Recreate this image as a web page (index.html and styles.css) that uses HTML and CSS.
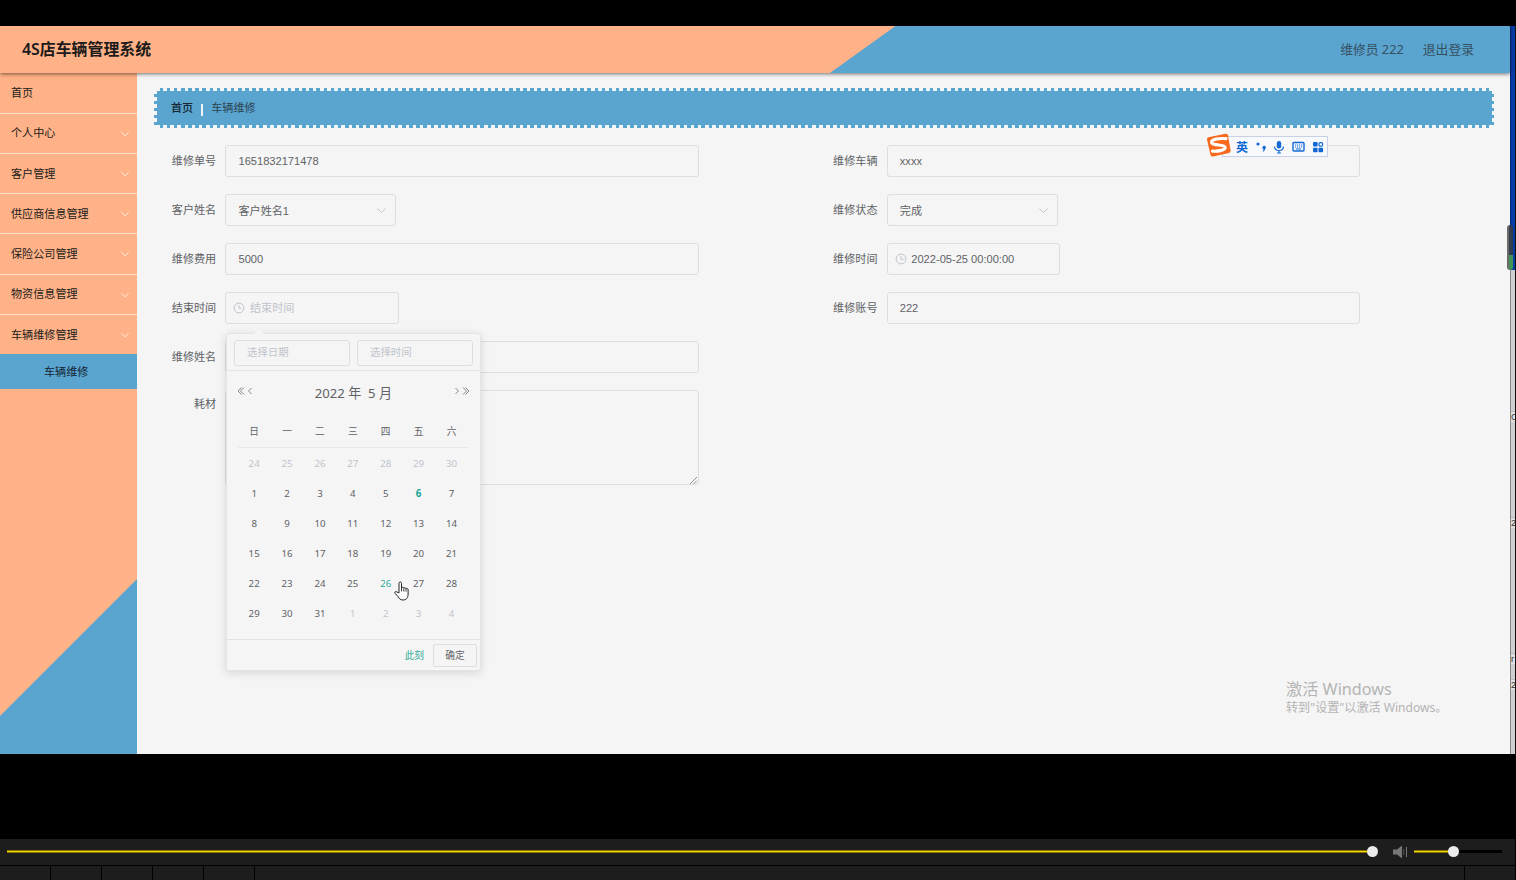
FILE: index.html
```html
<!DOCTYPE html>
<html lang="zh-CN">
<head>
<meta charset="utf-8">
<title>4S店车辆管理系统</title>
<link rel="stylesheet" href="styles.css">
</head>
<body>
<svg width="0" height="0" class="defs">
  <symbol id="down" viewBox="0 0 10 10"><path d="M1.300 3.200L5 6.800l3.700-3.600" fill="none" stroke="currentColor" stroke-width=".9"/></symbol>
  <symbol id="clock" viewBox="0 0 12 12"><circle cx="6" cy="6" r="4.9" fill="none" stroke="currentColor"/><path d="M6 3v3.300h2.600" fill="none" stroke="currentColor"/></symbol>
</svg>
<div class="screen">
  <div class="app">
    <header class="header">
      <h1 class="title">4S店车辆管理系统</h1>
      <div class="user"><span>维修员 222</span><span>退出登录</span></div>
    </header>
    <div class="main">
      <nav class="side">
        <div class="item">首页</div>
        <div class="item">个人中心<svg><use href="#down"/></svg></div>
        <div class="item">客户管理<svg><use href="#down"/></svg></div>
        <div class="item">供应商信息管理<svg><use href="#down"/></svg></div>
        <div class="item">保险公司管理<svg><use href="#down"/></svg></div>
        <div class="item">物资信息管理<svg><use href="#down"/></svg></div>
        <div class="item last">车辆维修管理<svg><use href="#down"/></svg></div>
        <div class="sub">车辆维修</div>
      </nav>
      <main class="content">
        <div class="crumb"><b>首页</b><i></i><span>车辆维修</span></div>
        <div class="form">
          <div class="field"><label>维修单号</label><div class="input">1651832171478</div></div>
          <div class="field"><label>维修车辆</label><div class="input">xxxx</div></div>
          <div class="field"><label>客户姓名</label><div class="input select">客户姓名1<svg><use href="#down"/></svg></div></div>
          <div class="field"><label>维修状态</label><div class="input select">完成<svg><use href="#down"/></svg></div></div>
          <div class="field"><label>维修费用</label><div class="input">5000</div></div>
          <div class="field"><label>维修时间</label><div class="input date"><svg><use href="#clock"/></svg>2022-05-25 00:00:00</div></div>
          <div class="field"><label>结束时间</label><div class="input date hint"><svg><use href="#clock"/></svg>结束时间</div></div>
          <div class="field"><label>维修账号</label><div class="input">222</div></div>
          <div class="field"><label>维修姓名</label><div class="input"></div></div>
          <div></div>
          <div class="field"><label>耗材</label><div class="input area"><svg viewBox="0 0 8 8"><path d="M0 8L8 0M4 8l4-4" stroke="#777" stroke-width=".9"/></svg></div></div>
        </div>
      </main>
    </div>
  </div>
  <aside class="behind">
    <div class="blue"></div>
    <div class="grey"><i class="t1">C</i><i class="t2">2</i><i class="t3">r</i><i class="t4">2</i></div>
  </aside>
  <div class="meter"></div>
</div>

<section class="picker">
  <div class="arrow"></div>
  <div class="ptop"><div>选择日期</div><div>选择时间</div></div>
  <div class="phead">
    <svg class="nav" viewBox="0 0 16 10"><path d="M4.500 1.500L1 5l3.500 3.500M7 1.500L3.500 5 7 8.500M14.500 2L11.500 5l3 3"/></svg>
    <div class="ym">2022 年&nbsp; 5 月</div>
    <svg class="nav" viewBox="0 0 16 10"><path d="M1.500 2l3 3-3 3M9 1.500L12.500 5 9 8.500M11.500 1.500L15 5l-3.500 3.500"/></svg>
  </div>
  <div class="week"><span>日</span><span>一</span><span>二</span><span>三</span><span>四</span><span>五</span><span>六</span></div>
  <div class="days">
    <span class="off">24</span><span class="off">25</span><span class="off">26</span><span class="off">27</span><span class="off">28</span><span class="off">29</span><span class="off">30</span>
    <span>1</span><span>2</span><span>3</span><span>4</span><span>5</span><span class="today">6</span><span>7</span>
    <span>8</span><span>9</span><span>10</span><span>11</span><span>12</span><span>13</span><span>14</span>
    <span>15</span><span>16</span><span>17</span><span>18</span><span>19</span><span>20</span><span>21</span>
    <span>22</span><span>23</span><span>24</span><span>25</span><span class="hover">26</span><span>27</span><span>28</span>
    <span>29</span><span>30</span><span>31</span><span class="off">1</span><span class="off">2</span><span class="off">3</span><span class="off">4</span>
  </div>
  <div class="pfoot"><span class="now">此刻</span><span class="ok">确定</span></div>
</section>

<svg class="cursor" viewBox="0 0 15 20"><path d="M5 12V2.300C5 .5 7.500.5 7.500 2.300V7c.3-1.200 2.200-1 2.300.3.500-1 2.100-.6 2.200.5.700-.8 2.100-.3 2.100.9V13c0 3.600-1.600 6-5.100 6-2.700 0-4-1.600-5-3.400L1 12.300c-.8-1.400.8-2.300 1.900-1.300z" fill="#fff" stroke="#222" stroke-width="1"/><path d="M7.500 7v3.300M9.800 7.500v3M12 8v2.700" stroke="#222" stroke-width=".9"/></svg>

<div class="ime">
  <span class="ying">英</span>
  <svg width="12" height="12" viewBox="0 0 12 12"><circle cx="3" cy="3" r="1.600"/><path d="M7.500 6.300a1.700 1.700 0 1 1 2.700 1.500C10 9.300 9.300 10.300 8 10.700l-.3-.7c.7-.4 1-.9 1-1.500-.7-.1-1.200-.8-1.200-1.500z"/></svg>
  <svg width="12" height="14" viewBox="0 0 12 14"><rect x="3.800" y="1" width="4.400" height="7.500" rx="2.200"/><path d="M1.500 6.500c.3 5.300 8.700 5.300 9 0M6 10.500V13M4 13h4" fill="none" stroke="#1269d6" stroke-width="1.200"/></svg>
  <svg width="13" height="12" viewBox="0 0 13 12"><rect x="1" y="1.500" width="11" height="8.500" rx="1" fill="none" stroke="#1269d6" stroke-width="1.400"/><path d="M3 4h7.500M3 6h7.500" stroke="#1269d6" stroke-dasharray="1.200 .8"/><path d="M4 8h5" stroke="#1269d6"/></svg>
  <svg width="12" height="12" viewBox="0 0 12 12"><rect x="1" y="1" width="4.600" height="4.600" rx="1"/><rect x="7" y="1.600" width="3.600" height="3.600" rx="1.200" fill="none" stroke="#1269d6" stroke-width="1.200"/><rect x="1" y="6.700" width="4.600" height="4.600" rx="1"/><rect x="6.500" y="6.700" width="4.600" height="4.600" rx="1"/></svg>
</div>
<svg class="sogou" viewBox="0 0 25 25"><path d="M2.500 4.200L19.500.7q2-.3 2.500 1.500l2.600 15.300q.2 1.900-1.600 2.400L7 23.500q-2 .4-2.500-1.600L1 6.500q-.3-1.800 1.500-2.300z" fill="#f9681b"/><path d="M20 5.700C13 5 5 6.300 5.600 9.600 6.300 13 18.800 11 19.200 14.300c.3 2.800-6.700 4.200-12.700 3.900" fill="none" stroke="#fff" stroke-width="3.200" stroke-linecap="round"/></svg>

<div class="activate"><p>激活 Windows</p><small>转到<q>设置</q>以激活 Windows。</small></div>

<footer class="player">
  <div class="controls">
    <div class="seek"><i class="knob"></i></div>
    <svg class="speaker" viewBox="0 0 15 14"><path d="M0 4.500h4L9 .5v13L4 9.500H0z" fill="#777"/><path d="M10.700 4v6" stroke="#555"/><path d="M13.500 2v10" stroke="#777"/></svg>
    <div class="volume"><div class="level"><i class="knob"></i></div></div>
  </div>
  <div class="tabs"><i></i><i></i><i></i><i></i><i></i><i class="wide"></i><i class="end"></i></div>
</footer>
</body>
</html>
```

FILE: styles.css
```css
* { box-sizing: border-box; }
body {
  margin: 0; padding-top: 26px; width: 1516px; height: 880px; overflow: hidden; background: #000;
  font: 11.1px/1.4 "Liberation Sans", "Noto Sans CJK SC", sans-serif; color: #606266; position: relative;
  display: flex; flex-direction: column;
}
i { font-style: normal; }
.defs { position: absolute; }
.screen { display: flex; height: 728px; flex: none; position: relative; }
.app { width: 1510px; background: #f5f5f5; display: flex; flex-direction: column; }
.header {
  height: 47px; flex: none; display: flex; align-items: center; justify-content: space-between;
  padding: 0 36px 0 22px; position: relative; z-index: 1; box-shadow: 0 1px 4px rgba(0,0,0,.55);
  background: #5aa4d0;
}
.header::before { content: ""; position: absolute; inset: 0; z-index: -1; background: #ffb287; clip-path: polygon(0 0, 895.5px 0, 830px 100%, 0 100%); }
.title { margin: 0; font: 600 15.9px/47px "Noto Sans", "Noto Sans CJK SC", sans-serif; color: #1c1a1a; }
.user { display: flex; gap: 19px; font: 12.8px/44px "Noto Sans", "Noto Sans CJK SC", sans-serif; color: #35505f; padding-bottom: 2px; }
.main { flex: 1; display: flex; }
.side { width: 137px; background: #ffb287; color: #221b1b; position: relative; isolation: isolate; }
.side::before { content: ""; position: absolute; inset: auto 0 0 0; height: 175px; z-index: -1; background: #5aa4d0; clip-path: polygon(0 137px, 100% 0, 100% 100%, 0 100%); }
.item { height: 40.25px; display: flex; align-items: center; justify-content: space-between; padding: 2px 7px 0 11px; border-bottom: 1px solid #fadccb; }
.item:first-child { height: 40.6px; }
.last { border-bottom: 0; height: 39.4px; }
.item svg { width: 10px; height: 10px; color: #fff0e6; margin-bottom: 1px; }
.sub { height: 35px; line-height: 36px; padding-left: 44px; background: #5aa4d0; color: #142431; }
.content { flex: 1; padding: 15px 16px 0 17px; }
.crumb {
  height: 40px; display: flex; align-items: center; padding: 2px 0 0 17px; color: #2c4350;
  background:
    linear-gradient(#5aa4d0, #5aa4d0) 3px 3px / calc(100% - 5px) calc(100% - 6px) no-repeat,
    repeating-linear-gradient(90deg, transparent 0 3.6px, #5aa4d0 3.6px 7.13px) 2px 0 / calc(100% - 4px) 100% no-repeat,
    repeating-linear-gradient(transparent 0 3.6px, #5aa4d0 3.6px 7px) 0 2px / 100% calc(100% - 4px) no-repeat;
}
.crumb b { font-weight: 500; color: #162733; }
.crumb i { width: 2px; height: 12px; background: #f0f3f5; margin: 1px 8px 0; }
.form { display: grid; grid-template-columns: 661.3px 661.3px; row-gap: 17px; padding: 17px 0 0 17.2px; }
.field { display: flex; gap: 9.3px; }
.field label { width: 45px; text-align: right; line-height: 32px; white-space: nowrap; flex: none; }
.input { width: 473.4px; height: 32px; line-height: 30px; border: 1px solid #dcdee2; border-radius: 3px; padding-left: 12px; background: #f5f5f5; }
.select { width: 171px; display: flex; align-items: center; justify-content: space-between; padding: 2px 8px 0 12px; }
.select svg { width: 11px; height: 11px; color: #c0c4cc; margin-bottom: 2px; }
.date { width: 173.5px; display: flex; align-items: center; gap: 4.5px; padding-left: 7px; }
.date svg { width: 12px; height: 12px; color: #c0c4cc; }
.hint { color: #c0c4cc; }
.area { height: 95px; position: relative; }
.area svg { position: absolute; right: 1px; bottom: 0; width: 7px; height: 7px; }
.field:last-child label { line-height: 29px; }
.behind { width: 6px; display: flex; flex-direction: column; border-right: 1px solid #111; overflow: hidden; }
.blue { height: 244px; background: #063ca8; border-left: 1px solid #052a75; }
.grey { flex: 1; background: #d0cfcf; border-left: 1px solid #888; position: relative; color: #333; font-size: 9px; line-height: 10px; }
.grey i { position: absolute; left: 0; width: 6px; background: #dfdfdf; border-top: 1px solid #bbb; }
.t1 { top: 141px; } .t2 { top: 247px; } .t3 { top: 383px; } .t4 { top: 409px; }
.meter { position: absolute; z-index: 2; left: 1507px; top: 199px; width: 6px; height: 45px; border-radius: 3px; background: linear-gradient(#333d4b 0 67%, #409455 67%); border-left: 2px solid #6b6b6b; }

.picker { position: absolute; left: 226px; top: 333px; width: 255px; height: 338px; background: #f5f5f5; border: 1px solid #e2e4e8; border-radius: 3px; box-shadow: 0 2px 10px rgba(0,0,0,.13); font: 9.7px/30px "Noto Sans", "Noto Sans CJK SC", sans-serif; }
.arrow { position: absolute; left: 27px; top: -5px; border: 5px solid transparent; border-top: 0; border-bottom-color: #f5f5f5; }
.ptop { display: flex; gap: 7px; padding: 6px 7px 4px; height: 37px; border-bottom: 1px solid #e2e4e8; }
.ptop div { width: 116px; height: 26px; border: 1px solid #dcdee2; border-radius: 3px; padding-left: 12px; font-size: 10.4px; line-height: 22px; color: #c0c4cc; }
.phead { display: flex; justify-content: space-between; height: 42px; padding: 0 10px; align-items: center; }
.nav { width: 16px; height: 10px; margin-bottom: 3px; fill: none; stroke: #777a7e; stroke-width: .9; }
.ym { font-size: 13.1px; padding-top: 1px; }
.week, .days { display: grid; grid-template-columns: repeat(7, 32.9px); width: 231px; margin: 0 auto; text-align: center; }
.week { margin-top: 4px; height: 31px; border-bottom: 1px solid #e6e8ec; }
.week span, .days span { margin-left: -.6px; }
.days { padding-top: 1px; height: 191px; grid-auto-rows: 30px; }
.off { color: #c0c4cc; }
.today { color: #18a394; font-weight: 700; }
.hover { color: #30ad98; }
.pfoot { height: 31px; border-top: 1px solid #e0e2e6; display: flex; justify-content: flex-end; padding: 4px 3px 0; gap: 9px; }
.now { color: #30ad98; line-height: 23px; }
.ok { width: 44px; height: 23px; border: 1px solid #dcdee2; border-radius: 2px; text-align: center; line-height: 22px; }
.cursor { position: absolute; left: 394px; top: 581px; width: 15px; height: 20px; }

.ime { position: absolute; left: 1222px; top: 136px; width: 106px; height: 21px; background: #f8f9fc; border: 1px solid #c7d0e4; display: flex; align-items: center; justify-content: space-between; padding: 0 3px 0 13px; }
.ime svg { fill: #1269d6; }
.ying { font: 700 12px/20px "Noto Sans CJK SC", sans-serif; color: #1269d6; }
.sogou { position: absolute; left: 1206px; top: 133px; width: 25px; height: 25px; }
.activate { position: absolute; left: 1286px; top: 679px; font-family: "Noto Sans", "Noto Sans CJK SC", sans-serif; color: #b4b4b4; }
.activate p { margin: 0; font-size: 16.2px; line-height: 20px; }
.activate small { display: block; font-size: 12.1px; line-height: 18px; white-space: nowrap; }
.activate q { quotes: "\22" "\22"; }

.player { margin-top: 85px; height: 41px; display: flex; flex-direction: column; width: 1515px; flex: none; }
.controls { height: 26px; background: #1d1d1d; display: flex; align-items: center; padding: 0 0 1px 7px; flex: none; }
.seek, .level { height: 3px; background: linear-gradient(#897500 1px, #f1d500 1px 2px, #897500 2px); position: relative; }
.seek { width: 1366px; }
.speaker { width: 15px; height: 14px; margin: 0 6px 0 20px; }
.volume { width: 88px; height: 3px; background: #000; }
.level { width: 40px; }
.knob { position: absolute; right: -5px; top: -4px; width: 11px; height: 11px; border-radius: 50%; background: #ebebeb; }
.tabs { display: flex; gap: 1px; margin-top: 1px; height: 14px; }
.tabs i { width: 50px; background: #1d1d1d; }
.tabs .wide { flex: 1; }
```
